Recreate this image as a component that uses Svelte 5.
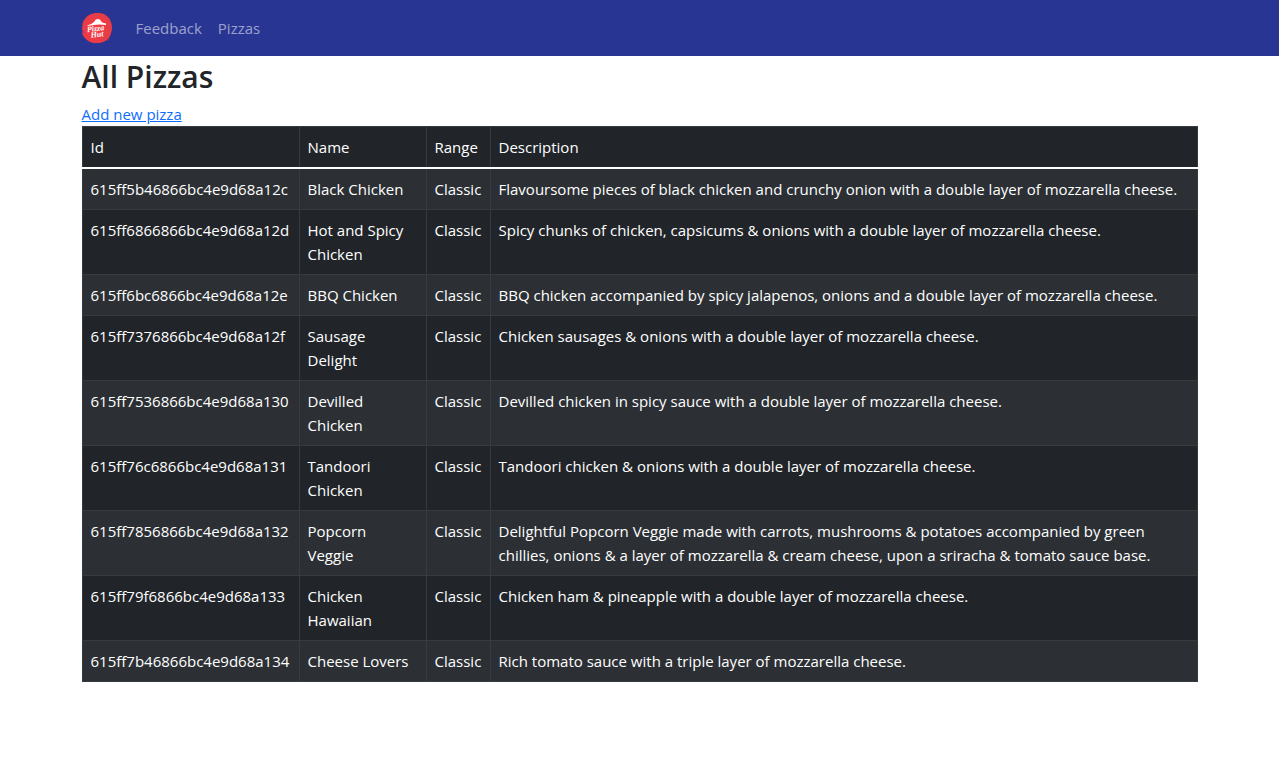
<script>
  const pizzas = [
    ['615ff5b46866bc4e9d68a12c', 'Black Chicken', 'Classic', 'Flavoursome pieces of black chicken and crunchy onion with a double layer of mozzarella cheese.'],
    ['615ff6866866bc4e9d68a12d', 'Hot and Spicy Chicken', 'Classic', 'Spicy chunks of chicken, capsicums & onions with a double layer of mozzarella cheese.'],
    ['615ff6bc6866bc4e9d68a12e', 'BBQ Chicken', 'Classic', 'BBQ chicken accompanied by spicy jalapenos, onions and a double layer of mozzarella cheese.'],
    ['615ff7376866bc4e9d68a12f', 'Sausage Delight', 'Classic', 'Chicken sausages & onions with a double layer of mozzarella cheese.'],
    ['615ff7536866bc4e9d68a130', 'Devilled Chicken', 'Classic', 'Devilled chicken in spicy sauce with a double layer of mozzarella cheese.'],
    ['615ff76c6866bc4e9d68a131', 'Tandoori Chicken', 'Classic', 'Tandoori chicken & onions with a double layer of mozzarella cheese.'],
    ['615ff7856866bc4e9d68a132', 'Popcorn Veggie', 'Classic', 'Delightful Popcorn Veggie made with carrots, mushrooms & potatoes accompanied by green chillies, onions & a layer of mozzarella & cream cheese, upon a sriracha & tomato sauce base.'],
    ['615ff79f6866bc4e9d68a133', 'Chicken Hawaiian', 'Classic', 'Chicken ham & pineapple with a double layer of mozzarella cheese.'],
    ['615ff7b46866bc4e9d68a134', 'Cheese Lovers', 'Classic', 'Rich tomato sauce with a triple layer of mozzarella cheese.']
  ];
</script>

<header>
  <nav class="container">
    <a class="brand" href="#home" aria-label="Home">
      <svg width="30" height="30" viewBox="0 0 30 30" aria-hidden="true">
        <path d="M7 2Q15-2 23 1.500q7 4.500 7 13.500-.5 9-6.500 13-8 4-15.500 1-6-3-8-9 1-1.500 0-4Q0 6 7 2z" fill="#ee3a43" />
        <path d="M3 20Q0 9 9 4q8-4 15 1 6 6 3 14-3 7-10 8" fill="none" stroke="#c9465f" stroke-width="0.8" />
        <path d="M0 17l2 3M25 28l3-3" stroke="#793b74" stroke-width="1" />
        <path d="M5 12.500q5-1 7.500-4 .5-2.500 3-2.500 3 0 3.500 2 .5 1.500 5 2.500v1.500q-9-1.500-18 1z" fill="#fff" />
        <g class="wordmark" fill="#fff" transform="rotate(-7 15 17)">
          <text x="5" y="18">Pizza</text>
          <text x="8" y="24">Hut</text>
        </g>
      </svg>
    </a>
    <a class="link" href="#feedback">Feedback</a>
    <a class="link" href="#pizzas">Pizzas</a>
  </nav>
</header>

<main class="container">
  <h2>All Pizzas</h2>
  <a class="add" href="#new">Add new pizza</a>
  <table>
    <colgroup>
      <col class="id" />
      <col class="name" />
      <col class="range" />
      <col />
    </colgroup>
    <thead>
      <tr>
        <th scope="col">Id</th>
        <th scope="col">Name</th>
        <th scope="col">Range</th>
        <th scope="col">Description</th>
      </tr>
    </thead>
    <tbody>
      {#each pizzas as pizza (pizza[0])}
        <tr>{#each pizza as value}<td>{value}</td>{/each}</tr>
      {/each}
    </tbody>
  </table>
</main>

<style>
  :global(body) {
    margin: 0;
    background: #fff;
    color: #212529;
    font: 15px/24px "Open Sans", "Noto Sans", sans-serif;
  }
  .container {
    box-sizing: border-box;
    width: 100%;
    max-width: 1140px;
    margin: 0 auto;
    padding: 0 12px;
  }
  header { background: #283593; }
  nav { display: flex; align-items: center; height: 56px; }
  .brand { display: flex; margin-right: 16px; }
  .wordmark { font: italic 700 8px "Liberation Serif", serif; }
  .link { padding: 8px; color: rgba(255, 255, 255, 0.55); text-decoration: none; }
  h2 { margin: 0; padding: 2px 0 6px; font-size: 30px; line-height: 38px; font-weight: 600; }
  .add { color: #0d6efd; }
  table {
    width: 100%;
    table-layout: fixed;
    border-collapse: collapse;
    color: #fff;
    background: #212529;
  }
  .id { width: 217px; }
  .name { width: 127px; }
  .range { width: 64px; }
  th, td {
    padding: 8px;
    border: 1px solid #373b3e;
    font-weight: 400;
    text-align: left;
    vertical-align: top;
  }
  td:nth-child(2) { padding-right: 16px; }
  th:nth-child(3), td:nth-child(3) { padding-right: 0; }
  tbody tr:nth-child(odd) { background: #2c3034; }
  tbody { border-top: 2px solid #fff; }
</style>
